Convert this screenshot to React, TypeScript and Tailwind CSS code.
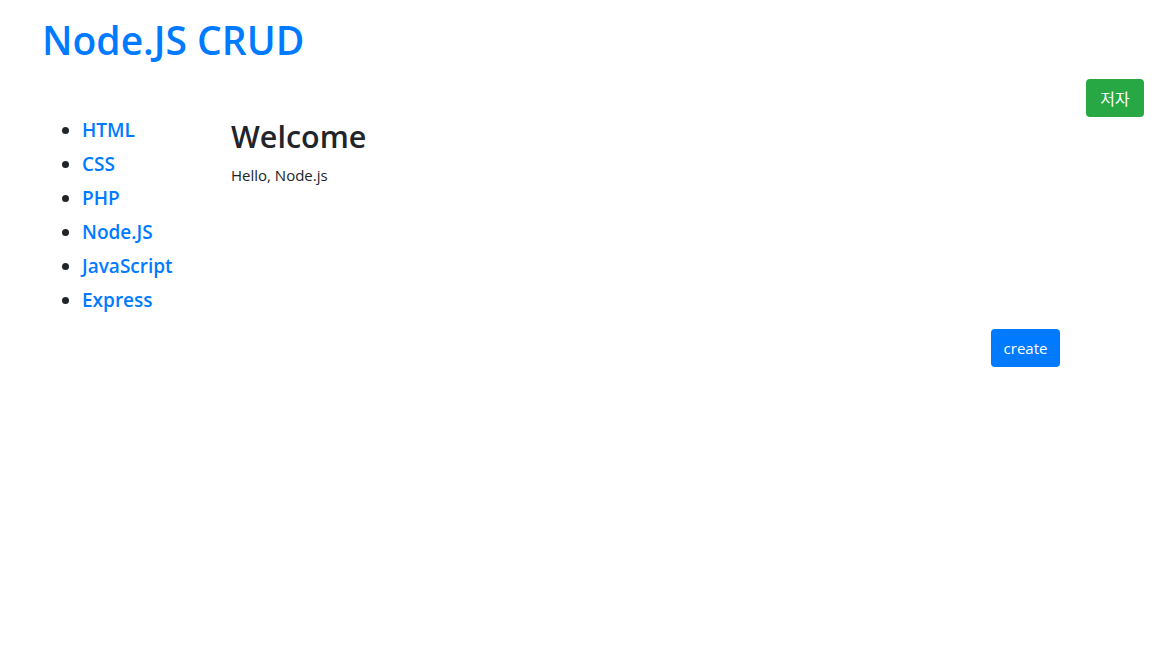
import React from "react";

const items = ["HTML", "CSS", "PHP", "Node.JS", "JavaScript", "Express"];

export default function App() {
  return (
    <div
      className="min-h-[661px] w-full bg-white pt-4 pl-[42px] pr-[31px] text-[#212529]"
      style={{ fontFamily: '"Open Sans", "Noto Sans CJK KR", sans-serif' }}
    >
      <h1 className="text-[39px] font-semibold leading-[48px] text-[#007bff]">
        <a href="#">Node.JS CRUD</a>
      </h1>
      <div className="mt-[15px] flex justify-end">
        <button className="h-[38px] w-[58px] rounded-[4px] bg-[#28a745] text-[16px] text-white" style={{ fontFamily: '"Noto Sans CJK KR", sans-serif' }}>
          저자
        </button>
      </div>
      <div className="flex">
        <ul className="w-[189px] shrink-0 list-disc pl-[40px]">
          {items.map((t) => (
            <li key={t} className="mb-[8px] text-[19px] font-semibold leading-[26px] text-[#007bff] marker:text-[#212529]">
              <a href="#">{t}</a>
            </li>
          ))}
        </ul>
        <div className="flex-1">
          <h2 className="mb-[8px] text-[30.5px] font-semibold leading-[38px]">Welcome</h2>
          <p className="text-[15px] leading-[24px]">Hello, Node.js</p>
        </div>
      </div>
      <div className="mt-[8px] flex justify-end pr-[84px]">
        <button className="h-[38px] w-[69px] rounded-[4px] bg-[#007bff] text-[15px] text-white">create</button>
      </div>
    </div>
  );
}
